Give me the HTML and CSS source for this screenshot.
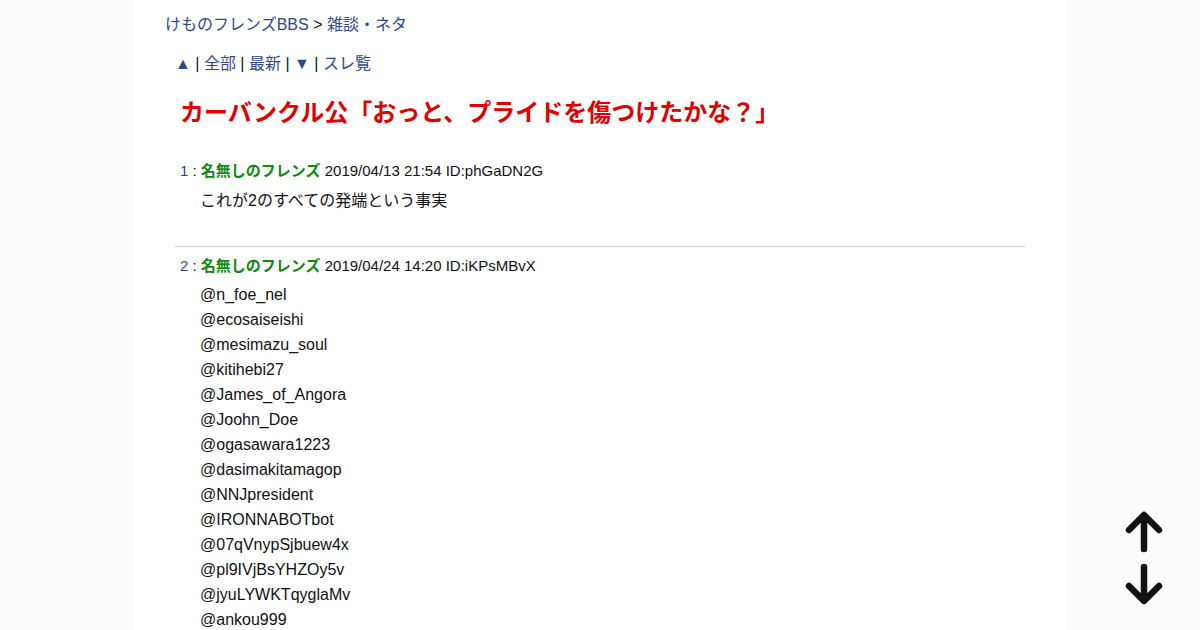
FILE: index.html
```html
<!DOCTYPE html>
<html lang="ja">
<head>
<meta charset="utf-8">
<title>カーバンクル公「おっと、プライドを傷つけたかな？」</title>
<link rel="stylesheet" href="styles.css">
</head>
<body>
<div class="page">
  <div class="crumbs"><a href="#">けものフレンズBBS</a> &gt; <a href="#">雑談・ネタ</a></div>
  <div class="nav"><a href="#">▲</a> | <a href="#">全部</a> | <a href="#">最新</a> | <a href="#">▼</a> | <a href="#">スレ覧</a></div>
  <h1 class="title">カーバンクル公「おっと、プライドを傷つけたかな？」</h1>
  <div class="posts">
    <div class="post">
      <div class="head"><span class="num">1</span> : <span class="name">名無しのフレンズ</span> 2019/04/13 21:54 ID:phGaDN2G</div>
      <div class="body">これが2のすべての発端という事実</div>
    </div>
    <div class="post">
      <div class="head"><span class="num">2</span> : <span class="name">名無しのフレンズ</span> 2019/04/24 14:20 ID:iKPsMBvX</div>
      <div class="body">@n_foe_nel<br>@ecosaiseishi<br>@mesimazu_soul<br>@kitihebi27<br>@James_of_Angora<br>@Joohn_Doe<br>@ogasawara1223<br>@dasimakitamagop<br>@NNJpresident<br>@IRONNABOTbot<br>@07qVnypSjbuew4x<br>@pl9IVjBsYHZOy5v<br>@jyuLYWKTqyglaMv<br>@ankou999</div>
    </div>
  </div>
</div>
<div class="scroller">
  <svg class="arrow" width="40" height="44" viewBox="0 0 40 44"><path d="M20 39 V6 M5 20 L20 5 L35 20" fill="none" stroke="#111" stroke-width="6.5" stroke-linecap="round" stroke-linejoin="round"/></svg>
  <svg class="arrow" width="40" height="44" viewBox="0 0 40 44"><path d="M20 5 V38 M5 24 L20 39 L35 24" fill="none" stroke="#111" stroke-width="6.5" stroke-linecap="round" stroke-linejoin="round"/></svg>
</div>
</body>
</html>
```
FILE: styles.css
```css
html, body {
  margin: 0;
  padding: 0;
  background: #fcfcfc;
  height: 100%;
  overflow: hidden;
}
body {
  font-family: "Liberation Sans", Arial, "Noto Sans CJK JP", sans-serif;
  font-size: 16px;
  color: #111;
}
a {
  color: #2b4a8c;
  text-decoration: none;
}
.page {
  width: 932px;
  margin: 0 auto;
  background: #fff;
  box-sizing: border-box;
  padding: 13px 41px 0 31px;
  min-height: 100%;
}
.crumbs {
  line-height: 24px;
}
.nav {
  line-height: 24px;
  margin-top: 15px;
  padding-left: 10px;
}
.title {
  margin: 21px 0 0 0;
  padding-left: 15px;
  font-size: 24px;
  line-height: 32px;
  font-weight: bold;
  color: #e00000;
}
.posts {
  margin-top: 31px;
  padding-left: 10px;
}
.post {
  border-bottom: 1px solid #ccc;
  padding-bottom: 33px;
  margin-bottom: 8px;
}
.head {
  font-size: 15px;
  line-height: 22px;
  padding-left: 5px;
}
.num {
  color: #2b4a8c;
}
.name {
  color: #118811;
  font-weight: bold;
}
.body {
  margin-top: 5px;
  padding-left: 25px;
  line-height: 25px;
}
.post:first-child .body {
  margin-top: 6px;
}
.scroller {
  position: fixed;
  right: 36px;
  top: 510px;
  display: flex;
  flex-direction: column;
  gap: 8px;
}
.arrow {
  display: block;
}
```
